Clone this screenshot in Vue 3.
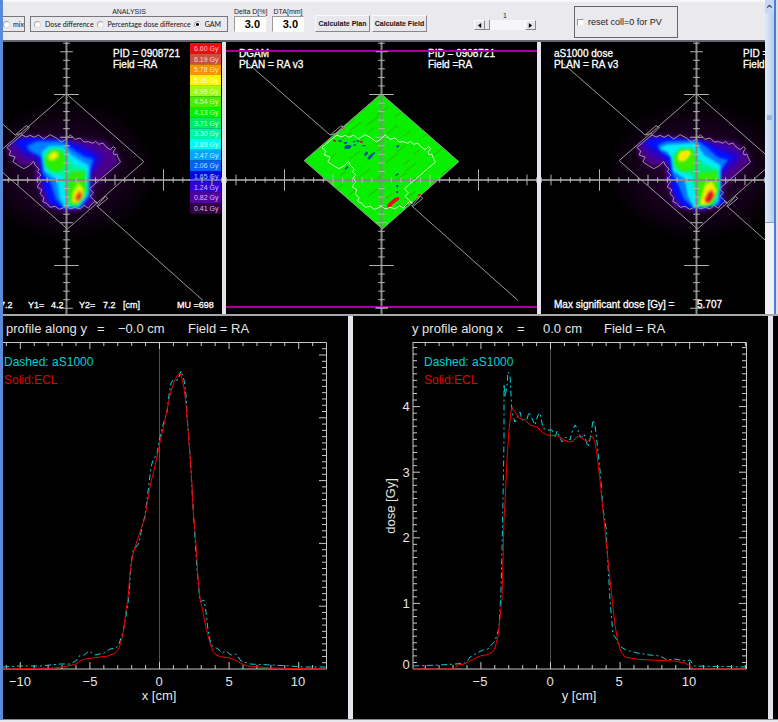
<script setup>
import { ref } from 'vue'

const mode = ref('gam')
const deltaD = ref('3.0')
const dta = ref('3.0')
const fieldNo = ref(1)
const resetColl = ref(false)

const scale = [
  ['6.60', '#ee0c0c', '#ffb0a0'], ['6.19', '#cc5040', '#ffb020'], ['5.78', '#f49400', '#ffe060'],
  ['5.36', '#fbf400', '#fffff0'], ['4.95', '#a0fa10', '#e8ffb0'], ['4.54', '#4cec00', '#d0ffb0'],
  ['4.13', '#00f400', '#b8ffb8'], ['3.71', '#00ec60', '#a0ffc0'], ['3.30', '#00f4a4', '#90ffd8'],
  ['2.89', '#00fcec', '#b0ffff'], ['2.47', '#00a8ff', '#b8e8ff'], ['2.06', '#0064f4', '#90c8ff'],
  ['1.65', '#0008e0', '#a8b0ff'], ['1.24', '#3400d4', '#d0c0ff'], ['0.82', '#5400a8', '#d8b8f0'],
  ['0.41', '#340044', '#d0c0d8'],
]

const outline =
  'M300 322L345 284L358 290L370 285L382 291L395 284L410 296L430 283L450 294L463 305L476 298L490 283L505 297L520 293L532 305L545 304L558 309L566 303L576 312L588 308L598 320L610 328L620 319L626 324L619 336L622 344L630 341L634 352L641 365L548 445L560 458L549 468L560 478L572 488L562 484L549 497L545 504L532 495L520 506L505 501L490 506L480 498L470 502L458 507L445 498L430 501L420 489L408 484L411 472L400 460L405 448L391 440L397 430L402 424L395 412L402 404L392 394L397 386L386 376L380 363L368 376L351 385L335 376L318 364L325 350L307 344L312 332Z'

const planDose = [
  ['#200030', 'M298 316L345 276L470 282L600 298L645 345L650 370L566 450L574 492L530 514L480 526L405 504L380 430L380 390L330 388L300 350Z'],
  ['#4a0088', 'M300 314L350 284L470 294L590 304L628 338L634 366L560 440L562 490L520 508L480 516L412 498L388 430L384 374L340 374L304 342Z'],
  ['#3400b8', 'M310 308L352 288L470 298L550 316L590 342L588 366L553 408L551 486L520 504L480 512L424 496L400 430L394 368L345 348Z'],
  ['#0010ff', 'M322 302L370 293L470 298L514 318L570 346L564 372L552 398L550 470L522 504L459 506L427 482L410 430L402 385L394 350L348 330Z'],
  ['#0080ff', 'M359 318L389 303L469 303L494 325L534 350L560 357L550 385L545 470L518 504L469 502L446 474L432 428L409 400L404 350L369 332Z'],
  ['#00e8ff', 'M405 335L427 316L469 317L499 348L547 376L546 462L516 500L474 500L459 474L450 418L412 392L405 355Z'],
  ['#00f48c', 'M410 345L429 324L466 324L484 350L499 375L538 388L543 457L514 496L485 496L474 455L466 405L429 397L411 375Z'],
  ['#2cec00', 'M415 350L432 330L460 330L475 350L472 387L444 395L418 378Z M487 396L532 393L537 452L514 492L490 493L484 450Z'],
  ['#b8f000', 'M422 346L438 332L454 335L456 350L438 362L424 358Z M497 455L514 424L532 448L530 474L511 490L494 488Z'],
  ['#fff000', 'M426 347L440 335L450 339L450 350L436 358Z M501 460L516 433L529 450L528 472L511 486L498 482Z'],
  ['#f47820', 'M504 474L516 450L527 458L524 475L510 485Z'],
  ['#d01818', 'M509 474L517 459L522 464L519 476Z'],
]

const epidDose = [
  ['#240034', 'M296 316L345 276L470 284L600 298L645 345L650 370L566 450L574 492L530 514L480 524L405 504L380 430L380 390L330 388L300 350Z'],
  ['#4a0088', 'M300 314L350 284L470 294L590 304L630 338L636 366L560 440L564 488L520 508L480 514L412 500L388 430L384 374L340 374L304 342Z'],
  ['#3000c0', 'M308 308L350 287L470 298L560 314L614 342L604 368L556 408L562 486L480 510L424 498L397 430L392 368L340 346Z'],
  ['#0010ff', 'M325 300L400 291L500 302L545 328L594 350L568 375L553 402L550 455L564 490L500 506L449 504L417 472L404 430L397 372L378 342L342 322Z'],
  ['#0078ff', 'M362 314L389 303L480 300L512 323L545 352L574 358L552 388L550 470L544 496L469 502L440 474L422 428L407 402L400 350L370 332Z'],
  ['#00ecf4', 'M366 324L390 313L478 307L502 344L550 374L552 440L543 484L511 501L472 502L454 470L443 415L408 392L402 350L392 334Z'],
  ['#00f078', 'M408 346L429 322L469 324L480 350L504 374L543 386L548 450L530 496L486 500L474 455L464 402L425 393L409 372Z'],
  ['#38ee00', 'M413 350L428 328L468 326L475 356L472 386L440 394L416 378Z M486 398L540 394L544 446L526 492L490 496L482 450Z'],
  ['#ccf400', 'M421 350L429 333L456 328L464 340L446 361L428 365Z M498 454L505 430L526 422L540 450L534 474L514 494L488 494Z'],
  ['#ffe800', 'M424 350L431 337L454 331L460 340L442 358L430 361Z M502 460L509 438L525 430L536 452L530 472L511 491L492 490Z'],
  ['#f08820', 'M502 476L513 454L526 446L534 462L528 478L508 490Z'],
  ['#d81818', 'M506 480L514 460L525 453L530 464L524 478L514 488Z'],
]

const spots = [
  ['#0050a0', 'M334 298h7v5h-7zM350 300h9v5h-9zM366 305h10v5h-10zM393 301h6v5h-6zM404 300h7v5h-7zM395 312h7v4h-7zM421 314h10v4h-10zM368 318l6 -4h12l3 5l-7 7h-13zM427 341l8 -8l4 6l-6 7h-6zM436 353l12 -13l10 -6l2 5l-18 19zM523 317l8 -4l2 5l-8 5zM368 386l8 -9l5 2l-9 10zM520 403l10 -5v5l-9 5zM523 434h6v7h-6zM523 452h6v7h-6zM578 413h6v5h-6z'],
  ['#e01020', 'M414 302h9v5h-9zM336 300h6v4h-6zM358 258h9v9h-9zM589 461h9v8h-9zM497 492l20 -18l14 -5l2 8l-20 15l-9 12h-8zM477 498h10v6h-10zM525 495l10 -3v3l-10 4zM548 494l10 -4v5l-8 5z'],
]
const streaks = []
for (let i = 0; i < 46; i++) {
  const x = 300 + ((i * 83) % 360)
  const y = 210 + ((i * 61) % 300)
  const n = 18 + ((i * 17) % 34)
  streaks.push(`M${x} ${y}l${n} ${-Math.round(n * 0.75)}`)
}

// Graticule: one tick per centimetre, longer marks every 5 and 10 cm.
let graticule = ''
for (let n = -16; n <= 16; n++) {
  if (!n) continue
  const x = 479 + n * 29.1
  const y = 419 + n * 25.65
  const h = n % 10 === 0 ? 32 : n % 5 === 0 ? 16 : 8
  const w = n % 10 === 0 ? 37 : n % 5 === 0 ? 19 : 10
  graticule += `M${x} ${419 - h}V${419 + h}M${479 - w} ${y}H${479 + w}`
}

const views = [
  { id: 'plan', x: 3, w: 219, cx: 66, dose: planDose, soft: 4, label: 'Planned dose' },
  { id: 'gam', x: 226, w: 311, cx: 381, label: 'Gamma map' },
  { id: 'epid', x: 541, w: 224, cx: 696, dose: epidDose, soft: 3, label: 'Measured dose' },
]

function ticks(p) {
  let d = ''
  for (let n = -12; n <= 14; n++) {
    const x = p.zero + n * 13.92
    if (x < p.left || x > p.right) continue
    const t = n % 5 === 0 ? 7 : 4
    d += `M${x} 342v${t}M${x} 669v${-t}`
  }
  for (let n = 1; 669 - n * p.unit > 343; n++) {
    const y = 669 - n * p.unit
    const t = n % 10 === 0 ? 7 : 4
    d += `M${p.right} ${y}h${-t}`
    if (p.dose) d += `M${p.left} ${y}h${t}`
  }
  return d
}

const plots = [
  {
    id: 'x', x: 3, w: 345, left: 3, right: 326, zero: 159.5, unit: 6.28, dose: false,
    title: [[6, 'profile along y'], [97, '='], [118, '−0.0 cm'], [188, 'Field = RA']],
    legend: 4, axis: [159, 'x [cm]'], marks: [[20, '−10'], [90, '−5'], [159, '0'], [229, '5'], [298, '10']],
    ecl: '3,669 55,668 62,667 72,665 76,664 80,661 85,659 92,658 100,657 108,656 115,653 119,648 122,638 124,628 126,610 128,598 130,573 132,559 135,547 139,535 142,526 145,518 147,504 151,482 155,466 159,447 162,433 165,420 168,405 171,391 174,382 177,376 180,373 182,379 184,388 186,405 188,430 190,455 192,485 193,508 195,530 197,560 198,578 200,598 203,612 206,628 210,643 213,651 216,655 222,657 230,658 237,661 242,664 248,666 260,667 270,668 326,669',
    epid: '3,667 20,666 40,666 60,664 70,664 76,661 79,656 84,655 89,651 95,655 104,653 110,649 116,648 119,644 123,632 126,616 129,596 131,564 133,551 139,543 142,528 145,515 147,500 149,484 151,467 153,460 157,454 160,437 163,425 167,412 169,395 171,383 173,380 178,380 181,371 184,380 186,395 187,415 189,440 191,470 193,507 197,570 200,602 204,600 206,612 208,630 211,645 218,649 222,653 226,651 231,655 236,654 241,661 250,664 270,665 291,666 300,667 326,667',
  },
  {
    id: 'y', x: 353, w: 415, left: 413, right: 746, zero: 550.5, unit: 6.56, dose: true,
    title: [[412, 'y profile along x'], [517, '='], [543, '0.0 cm'], [604, 'Field = RA']],
    legend: 424, axis: [579, 'y [cm]'], marks: [[480, '−5'], [550, '0'], [619, '5'], [689, '10']],
    ecl: '413,669 455,669 457,665 464,664 470,661 476,658 480,656 486,655 491,653 495,648 498,636 500,618 502,598 503,560 504,520 505,502 507,460 509,430 511,411 512,407 515,412 519,418 525,420 530,425 537,427 543,433 547,435 558,436 564,440 569,442 573,441 578,436 582,438 587,442 592,436 595,442 597,455 600,480 603,511 605,530 609,570 612,598 615,625 618,643 621,652 625,657 635,659 650,660 675,661 685,663 690,666 694,669 746,669',
    epid: '413,666 440,665 455,664 466,663 470,657 477,653 483,650 488,649 495,641 499,628 501,590 502,552 503,500 504,440 504,384 505,397 507,386 508,372 510,375 511,395 512,413 515,422 520,412 522,420 527,419 529,412 535,425 538,415 540,413 543,428 547,430 552,430 555,438 557,431 562,442 566,437 570,440 572,432 575,425 577,428 581,438 584,434 588,447 591,435 593,420 595,425 597,442 600,470 603,508 606,528 608,565 610,600 613,634 617,640 621,647 626,650 637,653 650,655 660,656 667,660 675,659 685,661 690,660 694,666 746,667',
  },
]
const doseMarks = [[669, '0'], [608, '1'], [542, '2'], [477, '3'], [411, '4']]
</script>

<template>
  <main class="window">
    <div class="upper">
      <div class="work">
        <form class="toolbar" @submit.prevent>
          <div class="frame clipped">
            <label class="choice"><input v-model="mode" type="radio" name="mode" value="mix" />mix</label>
          </div>
          <fieldset class="group">
            <legend class="caption">ANALYSIS</legend>
            <div class="frame modes">
              <label class="choice"><input v-model="mode" type="radio" name="mode" value="dose" />Dose difference</label>
              <label class="choice"><input v-model="mode" type="radio" name="mode" value="percent" />Percentage dose difference</label>
              <label class="choice"><input v-model="mode" type="radio" name="mode" value="gam" />GAM</label>
            </div>
          </fieldset>
          <div class="group number">
            <label class="caption" for="delta">Delta D[%]</label>
            <input id="delta" v-model="deltaD" type="text" />
          </div>
          <div class="group number">
            <label class="caption" for="dta">DTA[mm]</label>
            <input id="dta" v-model="dta" type="text" />
          </div>
          <div class="actions">
            <button type="button">Calculate Plan</button>
            <button type="button">Calculate Field</button>
          </div>
          <div class="stepper">
            <label class="caption" for="field">{{ fieldNo }}</label>
            <div class="track">
              <button type="button" aria-label="Previous" @click="fieldNo = Math.max(1, fieldNo - 1)">
                <svg viewBox="0 0 6 6"><path d="M5 0V6L1 3Z" /></svg>
              </button>
              <input id="field" v-model.number="fieldNo" type="range" min="1" max="9" />
              <button type="button" aria-label="Next" @click="fieldNo = Math.min(9, fieldNo + 1)">
                <svg viewBox="0 0 6 6"><path d="M1 0V6L5 3Z" /></svg>
              </button>
            </div>
          </div>
          <label class="reset"><input v-model="resetColl" type="checkbox" />reset coll=0 for PV</label>
        </form>

        <section class="views">
          <svg v-for="v in views" :key="v.id" :viewBox="`${v.x} 42 ${v.w} 272`" role="img" :aria-label="v.label">
            <defs>
              <filter :id="`soft-${v.id}`" x="-20%" y="-20%" width="140%" height="140%" color-interpolation-filters="sRGB">
                <feGaussianBlur :stdDeviation="v.soft || 1" />
              </filter>
              <radialGradient :id="`halo-${v.id}`">
                <stop offset="0.3" stop-color="#240030" />
                <stop offset="0.7" stop-color="#100014" />
                <stop offset="1" stop-color="#000000" />
              </radialGradient>
            </defs>
            <g :transform="`translate(${v.cx + 0.5} 180) scale(0.33333) translate(-479 -419)`">
              <template v-if="v.dose">
                <ellipse cx="479" cy="390" rx="275" ry="215" :fill="`url(#halo-${v.id})`" />
                <g :filter="`url(#soft-${v.id})`">
                  <path v-for="s in v.dose" :key="s[0]" :fill="s[0]" :d="s[1]" />
                </g>
              </template>
              <template v-else>
                <path class="pass" d="M478 160L711 364L482 566L247 361Z" />
                <clipPath id="field-area"><path d="M478 160L711 364L482 566L247 361Z" /></clipPath>
                <path class="streaks" clip-path="url(#field-area)" :d="streaks.join('')" />
                <path v-for="s in spots" :key="s[0]" :fill="s[0]" :d="s[1]" />
              </template>
              <path class="cross" d="M-900 419H1500M479 0V830" />
              <path class="axes" :d="graticule" />
              <path class="line" d="M478 160L711 364L482 566L247 361Z" />
              <path class="line" d="M65 58L325 284L345 279M570 497L888 780M325 284L358 256L368 261L338 290M570 497L596 468L603 474L575 497Z" />
              <path :class="['line', { bright: !v.dose }]" :d="outline" />
            </g>

            <g v-if="v.id === 'plan'" class="note">
              <text x="113" y="57">PID = 0908721</text>
              <text x="113" y="68">Field =RA</text>
              <g v-for="(s, i) in scale" :key="s[0]">
                <rect x="190" :y="43 + i * 10.67" width="31" height="10.8" :fill="s[1]" />
                <text class="dose-label" x="194" :y="51 + i * 10.67" :fill="s[2]">{{ s[0] }} Gy</text>
              </g>
              <path class="axes" d="M189 180H222M202 177V183M212 174V186" />
              <text class="small" x="0" y="308">7.2</text>
              <text class="small" x="28" y="308">Y1=</text>
              <text class="small" x="51" y="308">4.2</text>
              <text class="small" x="79" y="308">Y2=</text>
              <text class="small" x="103" y="308">7.2</text>
              <text class="small" x="123" y="308">[cm]</text>
              <text class="small" x="177" y="308">MU =698</text>
            </g>
            <g v-else-if="v.id === 'gam'" class="note">
              <text x="239" y="57">DGAM</text>
              <text x="239" y="68">PLAN = RA v3</text>
              <text x="428" y="57">PID = 0908721</text>
              <text x="428" y="68">Field =RA</text>
              <path class="limit" d="M226 51H537M226 307H537" />
              <path stroke="#c08060" d="M376 51.5H388M376 307.5H388" />
            </g>
            <g v-else class="note">
              <text x="554" y="57">aS1000 dose</text>
              <text x="554" y="68">PLAN = RA v3</text>
              <text x="743" y="57">PID = 0908721</text>
              <text x="743" y="68">Field =RA</text>
              <text x="554" y="308">Max significant dose [Gy] =</text>
              <text x="697" y="308">5.707</text>
            </g>
          </svg>
        </section>
      </div>
      <div class="scrollbar" aria-hidden="true">
        <div class="up"><svg viewBox="0 0 6 6"><path d="M1 4L3 2L5 4" /></svg></div>
        <div class="thumb"><i></i></div>
        <div class="rest"></div>
      </div>
      <div class="edge"></div>
    </div>

    <section class="profiles">
      <svg v-for="p in plots" :key="p.id" :viewBox="`${p.x} 316 ${p.w} 403`" role="img" :aria-label="`${p.id} profile`">
        <g class="label">
          <text v-for="t in p.title" :key="t[1]" :x="t[0]" y="333">{{ t[1] }}</text>
          <text v-for="m in p.marks" :key="m[1]" class="mark" :x="m[0]" y="686">{{ m[1] }}</text>
          <text class="mark" :x="p.axis[0]" y="700">{{ p.axis[1] }}</text>
          <g v-if="p.dose">
            <text v-for="m in doseMarks" :key="m[1]" class="mark" x="406" :y="m[0]">{{ m[1] }}</text>
            <text class="mark" transform="translate(395 506) rotate(-90)">dose [Gy]</text>
          </g>
          <text class="legend epid-text" :x="p.legend" y="366">Dashed: aS1000</text>
          <text class="legend ecl-text" :x="p.legend" y="384">Solid:ECL</text>
        </g>
        <path class="zero" :d="`M${p.zero} 342V669`" />
        <path class="plot-axes" :d="`M${p.left} 342.5H${p.right}.5V669H${p.left}${p.dose ? 'V342' : ''}`" />
        <path class="plot-axes" :d="ticks(p)" />
        <polyline class="curve epid" :points="p.epid" />
        <polyline class="curve ecl" :points="p.ecl" />
      </svg>
      <div class="void"></div>
    </section>
  </main>
</template>

<style>
body { margin: 0; background: #e6e6ec; }
</style>

<style scoped>
.window {
  border-left: 3px solid #5b8ad6;
  font-family: "Liberation Sans", Arial, sans-serif;
  background: #e6e4ec;
  color: #222;
}
.upper { display: grid; grid-template-columns: minmax(0, 1fr) 9px 4px; }
.work { min-width: 0; }
.toolbar {
  box-sizing: border-box;
  height: 42px;
  display: flex;
  align-items: flex-start;
  background: #eae9ee;
  border-top: 2px solid #f8f8fa;
  border-bottom: 2px solid #66646c;
  font-size: 7px;
  overflow: hidden;
}
.frame {
  box-sizing: border-box;
  display: flex;
  align-items: center;
  height: 16px;
  border: 1px solid #77767c;
}
.clipped { width: 22px; margin: 14px 5px 0 0; border-left: 0; overflow: hidden; }
.clipped .choice { gap: 3px; }
.clipped input { margin-left: -4px; }
.group { display: flex; flex-direction: column; margin: 0; padding: 0; border: 0; min-width: 0; }
.caption { display: block; height: 9px; line-height: 9px; padding: 5px 0 0; text-align: center; white-space: nowrap; }
fieldset .caption { width: 100%; }
.modes { width: 198px; padding: 0 6px 0 3px; justify-content: space-between; }
.choice { display: flex; align-items: center; gap: 4px; font-family: Lato, "Liberation Sans", sans-serif; color: #111; white-space: nowrap; }
.choice input {
  appearance: none;
  flex: none;
  box-sizing: border-box;
  width: 7px;
  height: 7px;
  margin: 0;
  border: 1px solid #a4a4a8;
  border-right-color: #ddd;
  border-bottom-color: #ddd;
  border-radius: 50%;
  background: #fff;
}
.choice input:checked { background: radial-gradient(#000 0 1px, #fff 2px); }
.number { margin-left: 6px; width: 32px; }
.number input {
  box-sizing: border-box;
  width: 100%;
  height: 16px;
  padding: 0 5px 0 0;
  border: 1px solid #fff;
  border-top-color: #999;
  border-left-color: #999;
  background: #fff;
  font: bold 11px "Liberation Sans", Arial, sans-serif;
  text-align: right;
}
.actions { display: flex; gap: 2px; margin: 13px 0 0 11px; }
.actions button {
  width: 55px;
  height: 17px;
  padding: 0;
  border: 1px solid #fafafa;
  border-right-color: #88878c;
  border-bottom-color: #88878c;
  background: #e8e7ec;
  font: bold 7px "Liberation Sans", Arial, sans-serif;
  color: #111;
  white-space: nowrap;
}
.stepper { margin: 6px 0 0 47px; width: 62px; }
.stepper .caption { padding-top: 3px; }
.track { display: flex; height: 10px; background: #f6f6f8; }
.track button {
  flex: none;
  display: flex;
  width: 11px;
  padding: 2px;
  border: 1px solid #fff;
  border-right-color: #88878c;
  border-bottom-color: #88878c;
  background: #e8e7ec;
}
.track button svg { width: 5px; height: 5px; }
.track input { appearance: none; flex: 1; min-width: 0; height: 10px; margin: 0; background: transparent; }
.track input::-webkit-slider-thumb {
  appearance: none;
  width: 5px;
  height: 10px;
  border-right: 1px solid #88878c;
  border-bottom: 1px solid #88878c;
  background: #e8e7ec;
}
.reset {
  box-sizing: border-box;
  display: flex;
  align-items: center;
  gap: 4px;
  width: 104px;
  height: 32px;
  margin: 4px 0 0 38px;
  padding-left: 2px;
  border: 1px solid #66656a;
  font-size: 9px;
  white-space: nowrap;
}
.reset input {
  appearance: none;
  flex: none;
  box-sizing: border-box;
  width: 7px;
  height: 7px;
  margin: 0;
  border: 1px solid #999;
  border-right-color: #eee;
  border-bottom-color: #eee;
  background: #fff;
}
.reset input:checked { background: #444; }

.views { display: grid; grid-template-columns: 219fr 311fr 224fr; gap: 4px; background: #e8e2ec; }
.views svg, .profiles svg { display: block; width: 100%; height: auto; background: #000; }
.cross { fill: none; stroke: #888888; stroke-width: 2; vector-effect: non-scaling-stroke; }
.axes { fill: none; stroke: #b4b4b4; stroke-width: 1; vector-effect: non-scaling-stroke; }
.line { fill: none; stroke: #989898; stroke-width: 1; vector-effect: non-scaling-stroke; }
.bright { stroke: #d0f8c8; }
.pass { fill: #08f000; }
.streaks { fill: none; stroke: #20c800; stroke-width: 4; }
.limit { stroke: #a8009c; stroke-width: 2; }
.note text { font-size: 10px; fill: #fff; stroke: #fff; stroke-width: 0.3px; }
.note .small { font-size: 9px; }
.note .dose-label { font-size: 7px; fill: #fff; stroke: none; fill-opacity: 0.75; }

.scrollbar { display: flex; flex-direction: column; background: #f2f4fa; }
.up { height: 13px; background: #c6d8f6; display: flex; align-items: center; justify-content: center; }
.up svg { width: 7px; height: 7px; fill: none; stroke: #445; }
.thumb { flex: 210; display: flex; align-items: center; background: linear-gradient(90deg, #dceafc, #b4ccec); border-bottom: 1px solid #88a4cc; }
.thumb i { width: 5px; height: 5px; margin: 0 auto; background: #9cb4dc; }
.rest { flex: 91; background: #f0f0f6; }
.edge { border-left: 2px solid #4a7cd0; background: #dcdcf0; }

.profiles {
  display: grid;
  grid-template-columns: 345fr 415fr 5px;
  gap: 5px;
  border-top: 2px solid #a8a8ac;
  border-bottom: 1px solid #88888c;
}
.void { background: #000; }
.label text { font-size: 13px; fill: #e4e4e4; }
.label .mark { text-anchor: middle; }
.label .legend { font-size: 12px; }
.label .epid-text { fill: #00d0d8; }
.label .ecl-text { fill: #e00000; }
.zero { stroke: #505050; }
.plot-axes { fill: none; stroke: #c8c8c8; stroke-width: 1; }
.curve { fill: none; stroke-width: 1; }
.ecl { stroke: #f00000; }
.epid { stroke: #00d4dc; stroke-dasharray: 6 3 2 3; }
</style>
